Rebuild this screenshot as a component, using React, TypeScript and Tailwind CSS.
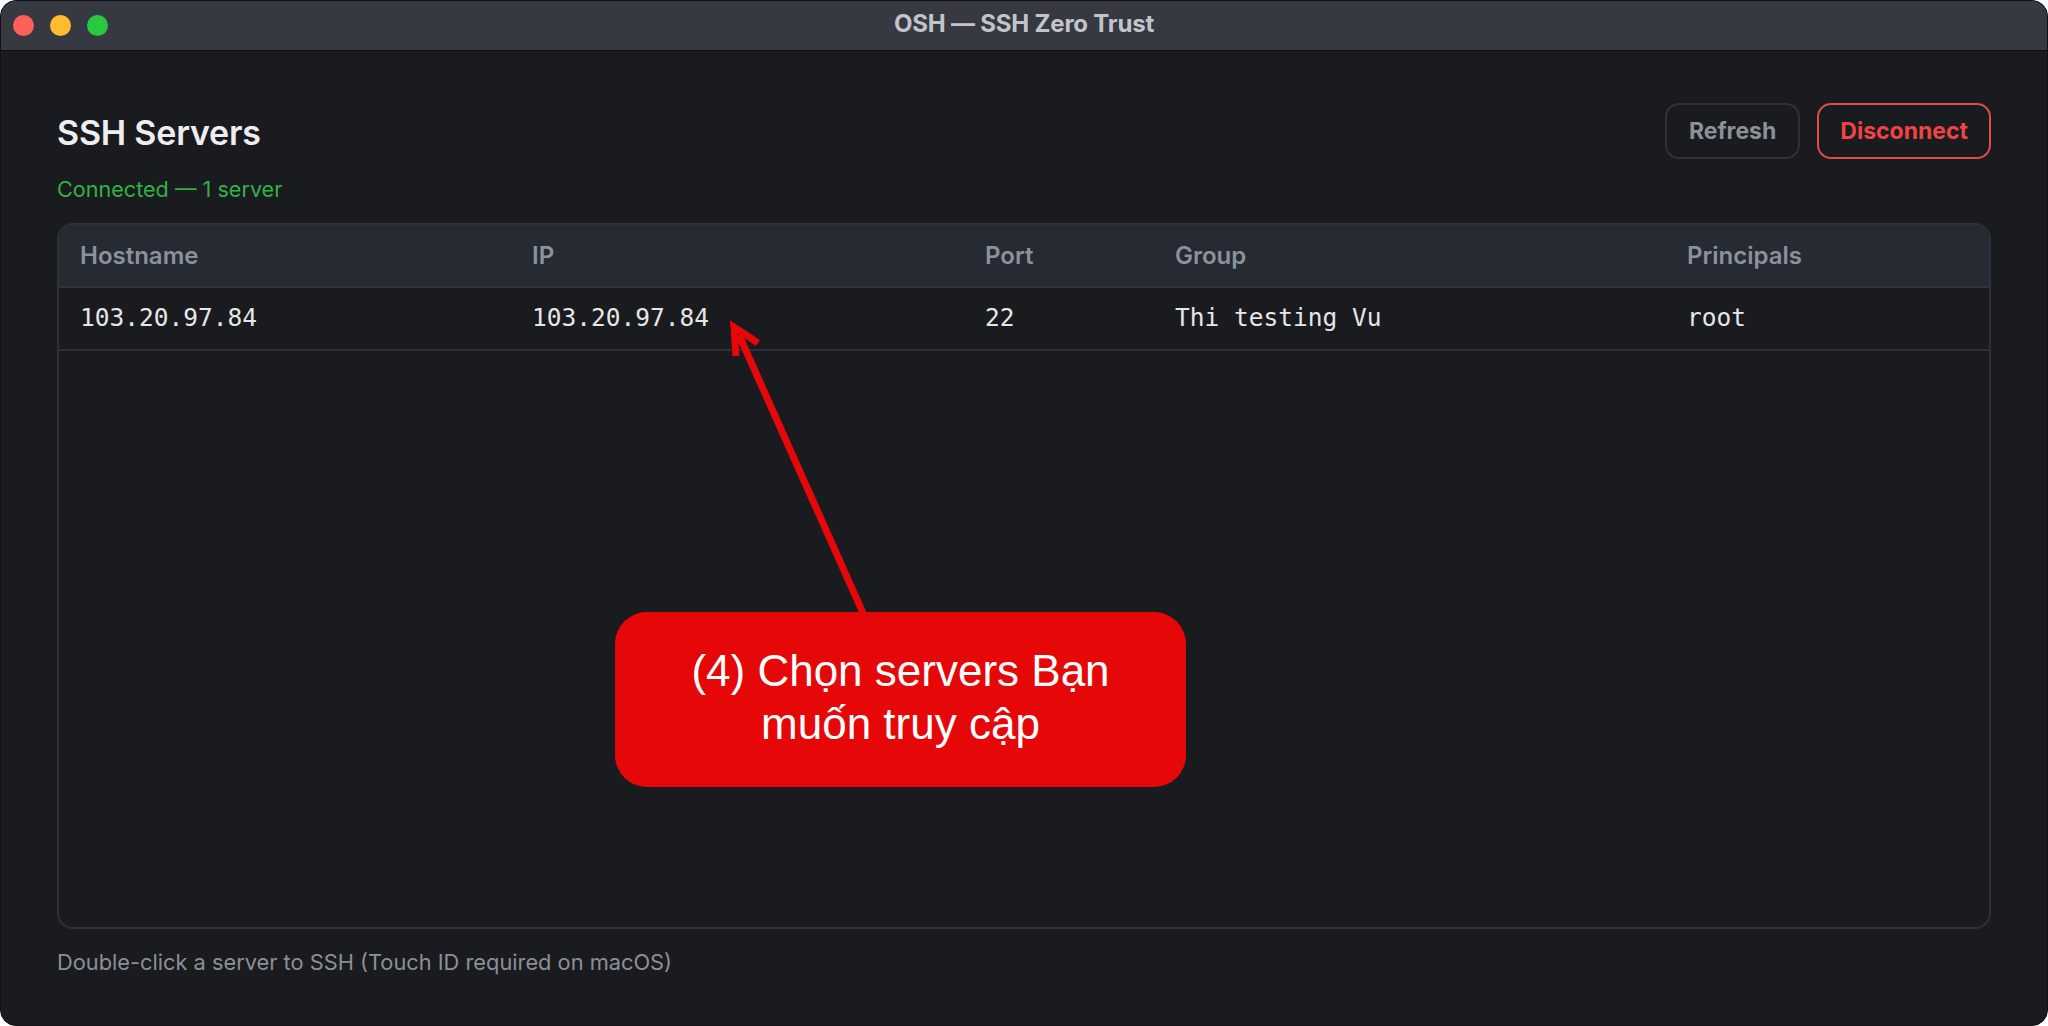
import React from 'react';

const columns = [
    { label: 'Hostname', width: 'w-[452px]' },
    { label: 'IP', width: 'w-[453px]' },
    { label: 'Port', width: 'w-[190px]' },
    { label: 'Group', width: 'w-[512px]' },
    { label: 'Principals', width: 'flex-1' },
];

const servers = [
    { hostname: '103.20.97.84', ip: '103.20.97.84', port: '22', group: 'Thi testing Vu', principals: 'root' },
];

const ui = { fontFamily: 'Inter, "Noto Sans", sans-serif' };
const mono = { fontFamily: '"DejaVu Sans Mono", "Liberation Mono", monospace' };

const App = () => {
    return (
        <div className="w-[2048px] h-[1026px] bg-white" style={ui}>
            <div className="relative h-full flex flex-col rounded-[16px] overflow-hidden bg-[#1a1b1f] border border-[#101114]">
                {/* title bar */}
                <div className="h-[50px] shrink-0 grid grid-cols-[1fr_auto_1fr] items-center bg-[#363941] border-b border-[#0e0f12]">
                    <div className="flex items-center gap-[16px] pl-[12px]">
                        <span className="w-[21px] h-[21px] rounded-full bg-[#fe5f57]" />
                        <span className="w-[21px] h-[21px] rounded-full bg-[#febc2e]" />
                        <span className="w-[21px] h-[21px] rounded-full bg-[#28c840]" />
                    </div>
                    <div className="pb-[4px] text-[24px] font-bold text-[#c2c4ca] tracking-[-0.2px]">OSH — SSH Zero Trust</div>
                    <div />
                </div>

                <div className="flex-1 flex flex-col px-[56px] pt-[52px] pb-[49px]">
                    <div className="flex items-center justify-between h-[56px]">
                        <h1 className="text-[34px] font-semibold text-[#eeeef0] tracking-[-0.2px] pt-[2px]">SSH Servers</h1>
                        <div className="flex gap-[17px]">
                            <button className="h-[56px] px-[22px] rounded-[14px] border-2 border-[#2e323a] text-[23px] font-bold text-[#8b9099]">
                                Refresh
                            </button>
                            <button className="h-[56px] px-[21px] rounded-[14px] border-2 border-[#e5484d] text-[23px] font-bold text-[#ef4444]">
                                Disconnect
                            </button>
                        </div>
                    </div>
                    <p className="mt-[16px] text-[21.6px] leading-[28px] text-[#2fb344]">Connected — 1 server</p>

                    <div className="mt-[20px] flex-1 rounded-[16px] border-2 border-[#2c3038] overflow-hidden">
                        <div className="flex h-[63px] items-center bg-[#262a33] border-b-2 border-[#2f343d]">
                            {columns.map((c) => (
                                <div key={c.label} className={`${c.width} px-[21px] text-[24px] font-semibold text-[#8b929d]`}>
                                    {c.label}
                                </div>
                            ))}
                        </div>
                        {servers.map((s) => (
                            <div key={s.ip} className="flex h-[63px] items-center border-b-2 border-[#2c3038] text-[24.5px] text-[#e6e6e9]" style={mono}>
                                <div className="w-[452px] px-[21px]">{s.hostname}</div>
                                <div className="w-[453px] px-[21px]">{s.ip}</div>
                                <div className="w-[190px] px-[21px]">{s.port}</div>
                                <div className="w-[512px] px-[21px]">{s.group}</div>
                                <div className="flex-1 px-[21px]">{s.principals}</div>
                            </div>
                        ))}
                    </div>

                    <p className="mt-[19px] text-[21.8px] leading-[28px] text-[#8b8f98]">
                        Double-click a server to SSH (Touch ID required on macOS)
                    </p>
                </div>

                {/* annotation */}
                <svg className="absolute left-0 top-0 pointer-events-none" width="2048" height="1026">
                    <line x1="862" y1="612" x2="738" y2="334" stroke="#e60808" strokeWidth="7" />
                    <polyline points="735,355 733,326 757,342" fill="none" stroke="#e60808" strokeWidth="7" strokeLinejoin="miter" />
                </svg>
                <div
                    className="absolute left-[614px] top-[611px] w-[571px] h-[175px] rounded-[32px] bg-[#e60808] flex items-center justify-center text-center text-white text-[44px] leading-[53px] pb-[6px]"
                    style={{ fontFamily: '"Liberation Sans", Arial, sans-serif' }}
                >
                    <span>(4) Chọn servers Bạn<br />muốn truy cập</span>
                </div>
            </div>
        </div>
    );
};

export default App;
